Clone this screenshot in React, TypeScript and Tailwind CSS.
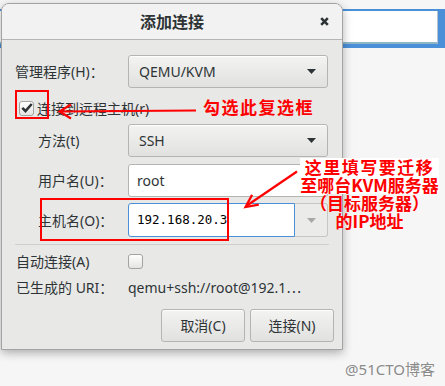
const ui = "font-['Noto_Sans','Noto_Sans_CJK_SC',sans-serif]";
const mark = "font-['Noto_Sans_CJK_SC','Noto_Sans',sans-serif]";

function Arrow({ gray }: { gray?: boolean }) {
  return (
    <svg width="9" height="5" viewBox="0 0 9 5">
      <path d="M0 0h9L4.5 5z" fill={gray ? '#a8a8a8' : '#2e3436'} />
    </svg>
  );
}

function Combo({ value }: { value: string }) {
  return (
    <div className="flex h-[33px] w-[200px] items-center justify-between rounded-[3px] border border-[#b4b4b1] bg-linear-to-b from-[#f3f3f2] to-[#e1e1df] pl-[10px] pr-[11px] text-[14px] text-[#2e3436] shadow-[inset_0_1px_0_white]">
      <span>{value}</span>
      <Arrow />
    </div>
  );
}

function Check({ checked }: { checked?: boolean }) {
  return (
    <span className="flex h-[15px] w-[15px] shrink-0 items-center justify-center rounded-[3px] border border-[#a3a3a0] bg-linear-to-b from-white to-[#e4e4e2]">
      {checked && (
        <svg width="12" height="10" viewBox="0 0 12 10">
          <path d="M1.3 4.8l3.2 3.2 6.2-7" stroke="#2e3436" strokeWidth="2.6" fill="none" />
        </svg>
      )}
    </span>
  );
}

function Button({ label }: { label: string }) {
  return (
    <div className="flex h-[33px] w-[84px] items-center justify-center rounded-[3px] border border-[#b4b4b1] bg-linear-to-b from-[#f3f3f2] to-[#e1e1df] text-[14px] text-[#2e3436] shadow-[inset_0_1px_0_white]">
      {label}
    </div>
  );
}

export default function App() {
  return (
    <div className={`relative h-[386px] w-[445px] overflow-hidden bg-[#f6f6f6] ${ui}`}>
      {/* window behind the dialog */}
      <div className="absolute left-0 right-0 top-[9px] h-[39px] bg-[#4a90d9] pr-[7px] pt-[2px]">
        <div className="h-[33px] border-b-2 border-r border-b-[#8fb6c7] border-r-[#b5c3cf] bg-white" />
      </div>

      <div className="relative pl-[1px] pt-[3px]">
        <div className="flex h-[347px] w-[342px] flex-col overflow-hidden rounded-t-[8px] border border-[#a3a3a3] bg-[#e8e8e7] shadow-[0_3px_10px_rgba(0,0,0,0.3)]">
          <div className="grid h-[36px] shrink-0 grid-cols-[1fr_auto_1fr] items-center border-b border-[#b6b6b6] bg-[#f2f2f2]">
            <span />
            <span className="text-[16px] font-bold text-[#2e3436]">添加连接</span>
            <div className="flex justify-end pr-[13px]">
              <svg width="9" height="9" viewBox="0 0 9 9">
                <path d="M1.2 1.2l6.6 6.6M7.8 1.2L1.2 7.8" stroke="#2e3436" strokeWidth="2.6" />
              </svg>
            </div>
          </div>

          <div className="flex flex-col pl-[13px] text-[14px] text-[#2e3436]">
            <div className="mt-[15px] flex h-[33px] items-center">
              <span className="w-[113px]">管理程序(H)：</span>
              <Combo value="QEMU/KVM" />
            </div>
            <div className="flex h-[36px] items-center gap-[3px] pl-[4px] pt-[4px]">
              <Check checked />
              <span>连接到远程主机(r)</span>
            </div>
            <div className="flex h-[33px] items-center">
              <span className="w-[113px] pl-[23px]">方法(t)</span>
              <Combo value="SSH" />
            </div>
            <div className="mt-[7px] flex h-[33px] items-center">
              <span className="w-[113px] pl-[23px]">用户名(U)：</span>
              <div className="flex h-[33px] w-[200px] items-center rounded-[3px] border border-[#b4b4b1] bg-white pl-[8px]">
                root
              </div>
            </div>
            <div className="mt-[6px] flex h-[34px] items-center">
              <span className="w-[113px] pl-[23px]">主机名(O)：</span>
              <div className="flex h-[34px] w-[200px]">
                <div className="flex flex-1 items-center rounded-l-[3px] border border-[#4a90d9] bg-white pl-[8px]">
                  <span className="font-['DejaVu_Sans_Mono',monospace] text-[12.5px] text-black">192.168.20.3</span>
                  <span className="h-[24px] w-px bg-black" />
                </div>
                <div className="flex w-[33px] items-center justify-center rounded-r-[3px] border border-l-0 border-[#c6c6c3] bg-[#ebebea]">
                  <Arrow gray />
                </div>
              </div>
            </div>
            <div className="mt-[7px] h-px w-[314px] bg-[#cfcfcd]" />
            <div className="flex h-[33px] items-center">
              <span className="w-[113px] pl-[1px]">自动连接(A)</span>
              <Check />
            </div>
            <div className="flex h-[18px] items-center">
              <span className="w-[113px] pl-[1px]">已生成的 URI：</span>
              <span>qemu+ssh://root@192.1⋯</span>
            </div>
            <div className="mt-[13px] flex justify-end gap-[5px] pr-[8px]">
              <Button label="取消(C)" />
              <Button label="连接(N)" />
            </div>
          </div>
        </div>
      </div>

      <div className="mt-[10px] flex justify-end pr-[10px]">
        <span className="text-[15px] leading-[18px] text-[#8a8a8a] [text-shadow:0_0_2px_white]">@51CTO博客</span>
      </div>

      {/* red annotations */}
      <div className="absolute left-[15px] top-[90px] h-[29px] w-[34px] border-2 border-[#ff0000]" />
      <div className="absolute left-[40px] top-[198px] h-[43px] w-[189px] border-2 border-[#ff0000]" />
      <svg className="pointer-events-none absolute left-0 top-0" width="445" height="386">
        <g stroke="#ff0000" strokeWidth="2.2" fill="none">
          <path d="M196 110.5L61 111.5" />
          <path d="M71 104.5L59.5 111.5L71 118.5" />
          <path d="M297 171.5L247 205.5" />
          <path d="M258.8 204.6L245.5 207L252.1 194.9" />
        </g>
      </svg>
      <div className={`absolute left-[203px] top-[97px] text-[17px] font-bold leading-[20px] tracking-[1.5px] text-[#ff0000] ${mark}`}>
        勾选此复选框
      </div>
      <div className={`absolute left-[300px] top-[158px] w-[139px] text-center text-[17px] font-bold leading-[18px] text-[#ff0000] ${mark}`}>
        <div className="bg-white tracking-[1.5px]">这里填写要迁移</div>
        <div className="bg-white">至哪台KVM服务器</div>
        <div>（目标服务器）</div>
        <div>的IP地址</div>
      </div>
    </div>
  );
}
